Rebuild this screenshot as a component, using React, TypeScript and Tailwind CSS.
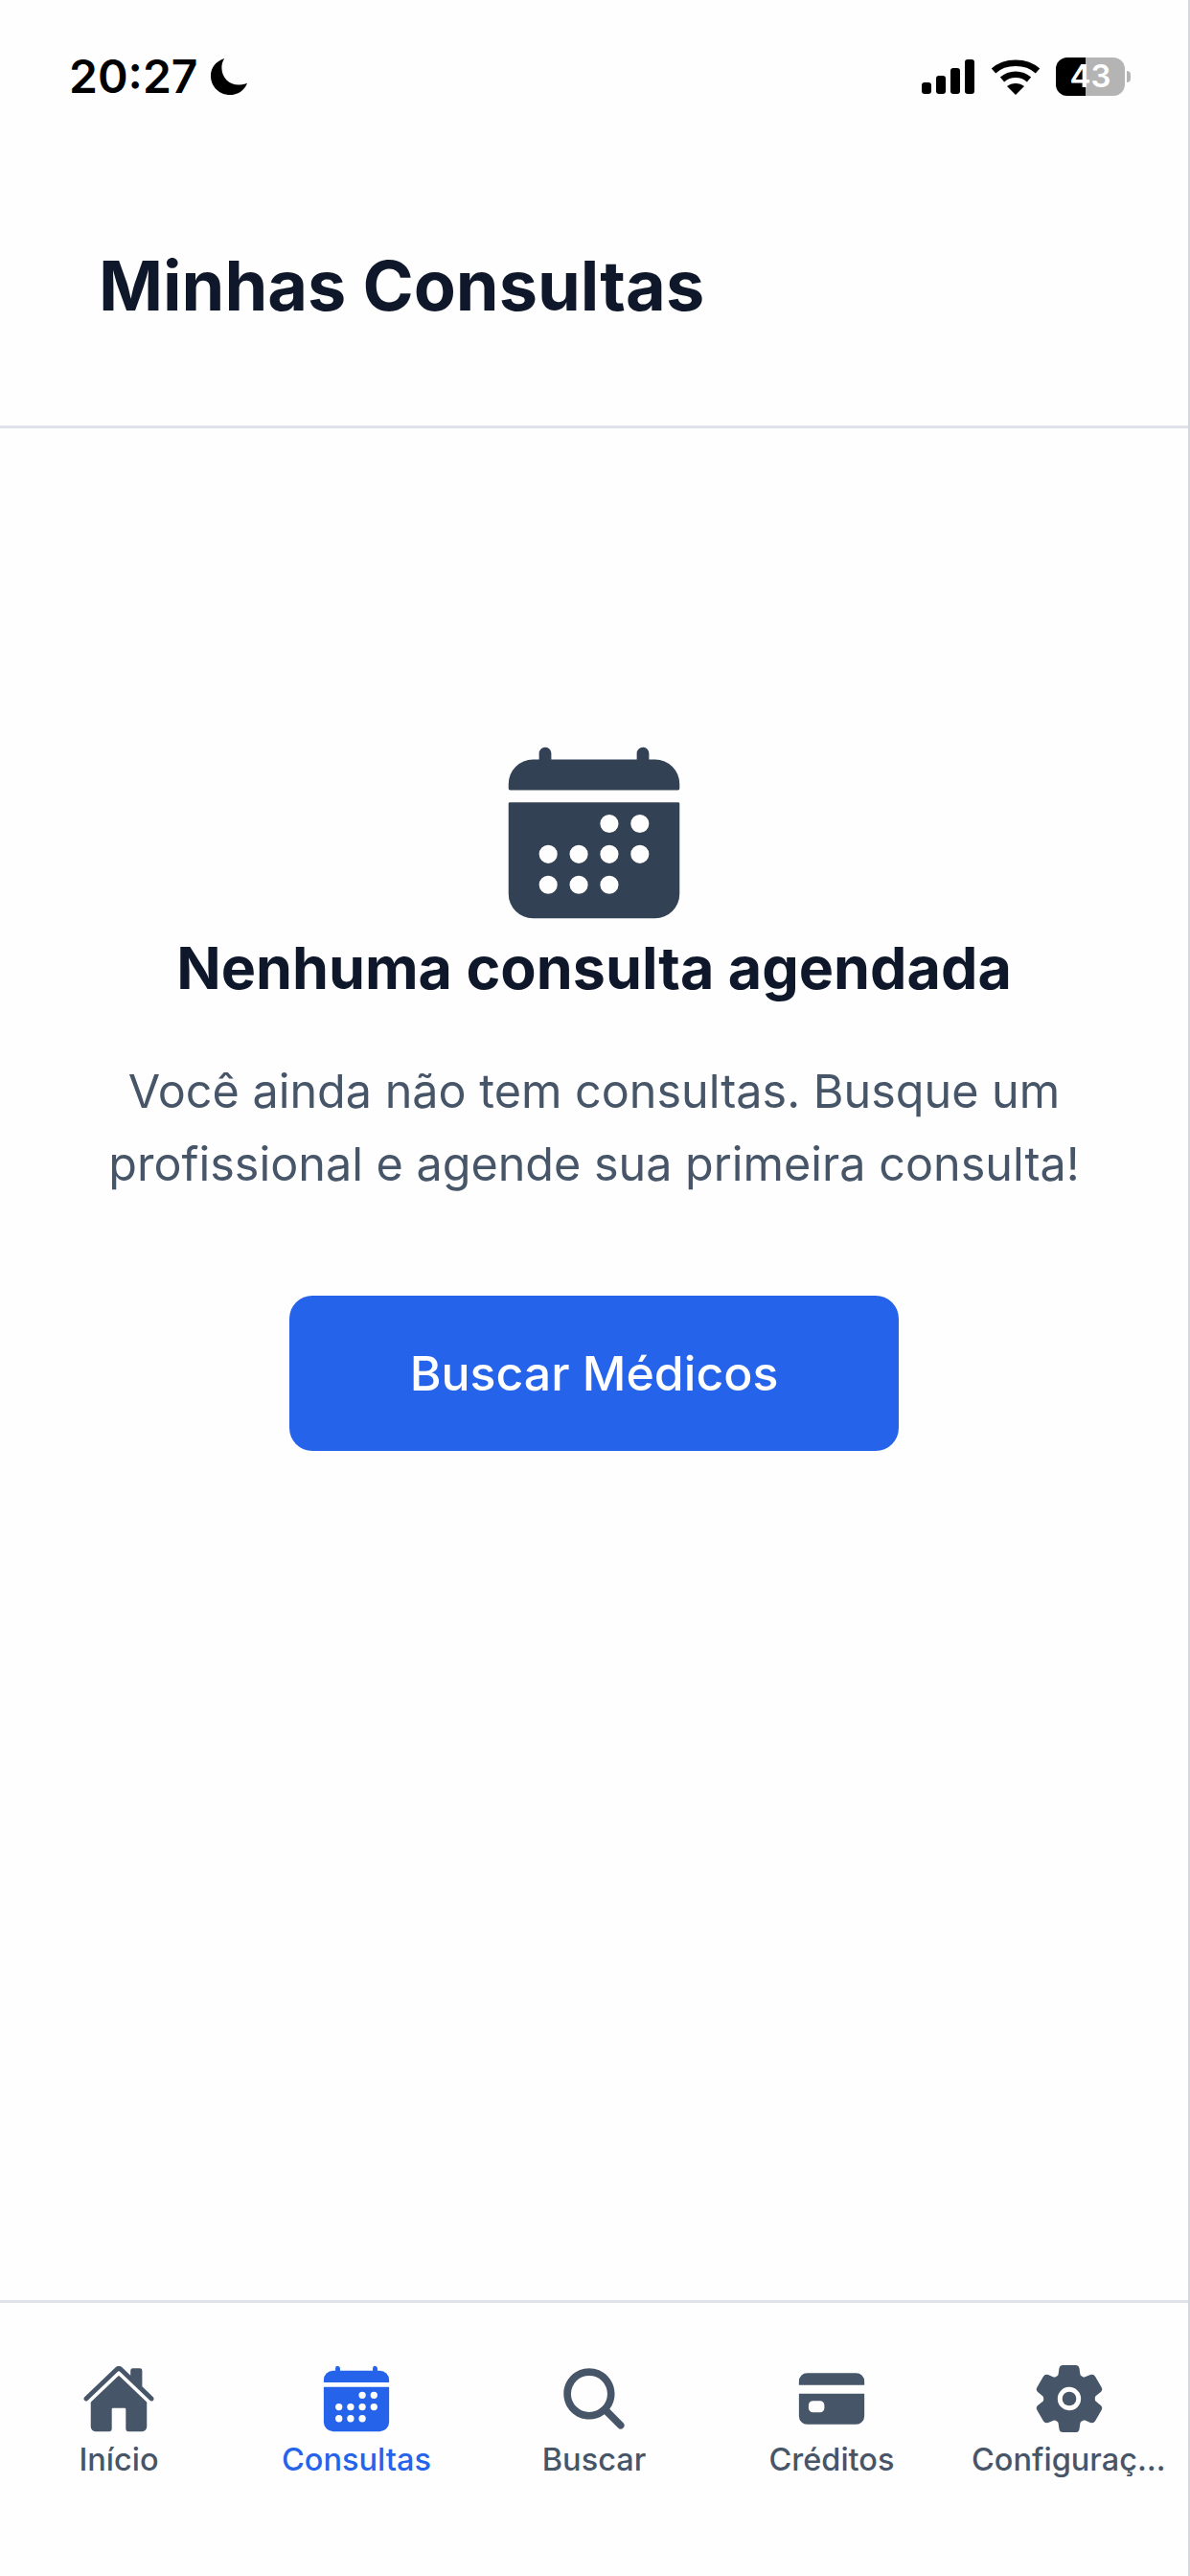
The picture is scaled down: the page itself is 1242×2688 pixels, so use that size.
import { IoCalendar, IoCard, IoHome, IoSearch, IoSettings } from 'react-icons/io5';

const tabs = [
  { label: 'Início', Icon: IoHome },
  { label: 'Consultas', Icon: IoCalendar, active: true },
  { label: 'Buscar', Icon: IoSearch },
  { label: 'Créditos', Icon: IoCard },
  { label: 'Configurações', Icon: IoSettings },
];

function StatusBar() {
  return (
    <div className="flex h-[156px] items-center justify-between pt-[3px] pl-[72px] pr-[60px]">
      <div className="flex items-center gap-[13px]">
        <span className="text-[48px] font-semibold leading-none text-black">20:27</span>
        <svg width="40" height="40" viewBox="0 0 42 42" className="text-black">
          <path
            fill="currentColor"
            d="M16 1C6.500 4 1 11.500 1 20c0 12 9.500 21 21 21 8.500 0 16-5 19-13-3 1.500-6 2-9 2-11 0-19-8-19-19 0-3.500 1-7 3-10z"
          />
        </svg>
      </div>
      <div className="flex items-center gap-[15px]">
        <svg width="56" height="36" viewBox="0 0 56 36" className="text-black">
          <rect x="0" y="24" width="10" height="12" rx="3" fill="currentColor" />
          <rect x="15" y="17" width="10" height="19" rx="3" fill="currentColor" />
          <rect x="30" y="9" width="10" height="27" rx="3" fill="currentColor" />
          <rect x="45" y="0" width="10" height="36" rx="3" fill="currentColor" />
        </svg>
        <svg width="54" height="38" viewBox="0 0 52 38" className="text-black">
          <path fill="none" stroke="currentColor" strokeWidth="6.500" d="M3 13C15 2 37 2 49 13" />
          <path fill="none" stroke="currentColor" strokeWidth="6.500" d="M12 22c8-7 20-7 28 0" />
          <path fill="currentColor" d="M26 38l-9-9c5-4 13-4 18 0z" />
        </svg>
        <div className="flex items-center gap-[2px]">
          <div className="relative flex h-[40px] w-[72px] overflow-hidden rounded-[12px] bg-[#b4b4b4]">
            <div className="h-full w-[31px] bg-black" />
            <span className="absolute inset-0 flex items-center justify-center text-[33px] font-semibold leading-none text-white">
              43
            </span>
          </div>
          <div className="h-[12px] w-[4px] rounded-r-full bg-[#b4b4b4]" />
        </div>
      </div>
    </div>
  );
}

export default function App() {
  return (
    <div className="flex h-[2688px] w-[1242px] flex-col border-r-[2px] border-[#d4d8de] bg-[#fefefe] font-['Inter',sans-serif]">
      <StatusBar />

      <header className="flex h-[291px] items-center border-b-[3px] border-[#dfe3e9] pb-[4px] pl-[103px]">
        <h1 className="text-[72px] font-bold leading-none text-[#0f172a]">Minhas Consultas</h1>
      </header>

      <main className="flex flex-1 flex-col items-center pt-[320px]">
        <IoCalendar size={204} className="text-[#334155]" />
        <h2 className="mt-[3px] text-[61px] font-bold leading-[72px] text-[#0f172a]">Nenhuma consulta agendada</h2>
        <p className="mt-[55px] w-[1090px] text-center text-[48.500px] leading-[76px] text-[#475569]">
          Você ainda não tem consultas. Busque um profissional e agende sua primeira consulta!
        </p>
        <button className="mt-[99px] h-[162px] w-[636px] rounded-[24px] bg-[#2563eb] text-[50px] font-medium text-white">
          Buscar Médicos
        </button>
      </main>

      <nav className="grid h-[288px] grid-cols-5 border-t-[3px] border-[#dfe3e9] pt-[61px]">
        {tabs.map(({ label, Icon, active }) => (
          <div key={label} className="flex min-w-0 flex-col items-center">
            <Icon size={78} className={active ? 'text-[#2563eb]' : 'text-[#475569]'} />
            <span
              className={`mt-[3px] w-full truncate px-[22px] text-center text-[32.500px] font-medium leading-[44px] ${
                active ? 'text-[#2563eb]' : 'text-[#475569]'
              }`}
            >
              {label}
            </span>
          </div>
        ))}
      </nav>
    </div>
  );
}
